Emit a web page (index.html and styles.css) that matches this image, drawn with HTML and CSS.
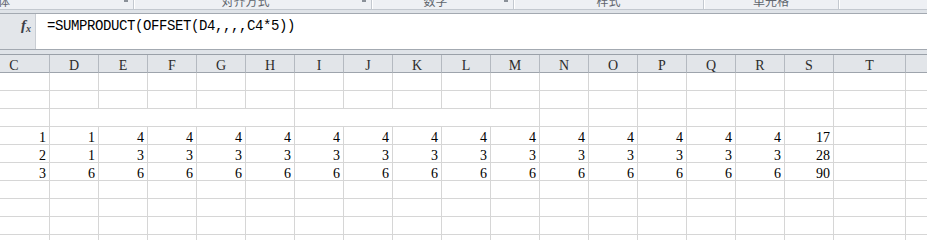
FILE: index.html
```html
<!DOCTYPE html>
<html lang="zh-CN">
<head>
<meta charset="utf-8">
<title>Excel</title>
<link rel="stylesheet" href="styles.css">
</head>
<body>
<div class="ribbon">
  <div class="group g-font launch"><span class="label">字体</span><span class="launcher"></span></div>
  <div class="group g-align launch"><span class="label">对齐方式</span><span class="launcher"></span></div>
  <div class="group g-num launch"><span class="label">数字</span><span class="launcher"></span></div>
  <div class="group g-style"><span class="label">样式</span></div>
  <div class="group g-cell"><span class="label">单元格</span></div>
  <div class="group g-edit"></div>
</div>
<div class="band band-top"></div>
<div class="formula-bar">
  <div class="fx"><span class="fx-f">f</span><span class="fx-x">x</span></div>
  <div class="formula">=SUMPRODUCT(OFFSET(D4,,,,C4*5))</div>
</div>
<div class="band band-bottom"></div>
<div class="sheet">
<table class="grid">
  <colgroup>
    <col class="c-wide">
    <col class="c"><col class="c"><col class="c"><col class="c"><col class="c"><col class="c"><col class="c"><col class="c">
    <col class="c"><col class="c"><col class="c"><col class="c"><col class="c"><col class="c"><col class="c"><col class="c">
    <col class="c-wide2"><col class="c-wide2">
  </colgroup>
  <tr class="head">
    <th>C</th><th>D</th><th>E</th><th>F</th><th>G</th><th>H</th><th>I</th><th>J</th><th>K</th><th>L</th><th>M</th><th>N</th><th>O</th><th>P</th><th>Q</th><th>R</th><th>S</th><th>T</th><th></th>
  </tr>
  <tr><td></td><td></td><td></td><td></td><td></td><td></td><td></td><td></td><td></td><td></td><td></td><td></td><td></td><td></td><td></td><td></td><td></td><td></td><td></td></tr>
  <tr><td></td><td></td><td></td><td></td><td></td><td></td><td></td><td></td><td></td><td></td><td></td><td></td><td></td><td></td><td></td><td></td><td></td><td></td><td></td></tr>
  <tr><td></td><td colspan="5"></td><td colspan="5"></td><td></td><td></td><td></td><td></td><td></td><td></td><td></td><td></td></tr>
  <tr><td>1</td><td>1</td><td>4</td><td>4</td><td>4</td><td>4</td><td>4</td><td>4</td><td>4</td><td>4</td><td>4</td><td>4</td><td>4</td><td>4</td><td>4</td><td>4</td><td>17</td><td></td><td></td></tr>
  <tr><td>2</td><td>1</td><td>3</td><td>3</td><td>3</td><td>3</td><td>3</td><td>3</td><td>3</td><td>3</td><td>3</td><td>3</td><td>3</td><td>3</td><td>3</td><td>3</td><td>28</td><td></td><td></td></tr>
  <tr><td>3</td><td>6</td><td>6</td><td>6</td><td>6</td><td>6</td><td>6</td><td>6</td><td>6</td><td>6</td><td>6</td><td>6</td><td>6</td><td>6</td><td>6</td><td>6</td><td>90</td><td></td><td></td></tr>
  <tr><td></td><td></td><td></td><td></td><td></td><td></td><td></td><td></td><td></td><td></td><td></td><td></td><td></td><td></td><td></td><td></td><td></td><td></td><td></td></tr>
  <tr><td></td><td></td><td></td><td></td><td></td><td></td><td></td><td></td><td></td><td></td><td></td><td></td><td></td><td></td><td></td><td></td><td></td><td></td><td></td></tr>
  <tr><td></td><td></td><td></td><td></td><td></td><td></td><td></td><td></td><td></td><td></td><td></td><td></td><td></td><td></td><td></td><td></td><td></td><td></td><td></td></tr>
  <tr><td></td><td></td><td></td><td></td><td></td><td></td><td></td><td></td><td></td><td></td><td></td><td></td><td></td><td></td><td></td><td></td><td></td><td></td><td></td></tr>
</table>
</div>
</body>
</html>
```

FILE: styles.css
```css
html, body {
  margin: 0;
  padding: 0;
  background: #ffffff;
  overflow: hidden;
}

body {
  width: 927px;
  height: 240px;
  font-family: "Liberation Serif", "DejaVu Serif", serif;
}

/* ribbon bottom strip */
.ribbon {
  display: flex;
  height: 9px;
  background: #eef0f4;
  border-bottom: 1px solid #c3c8cf;
  overflow: hidden;
}

.group {
  position: relative;
  flex: none;
  display: flex;
  align-items: flex-end;
  justify-content: center;
  box-sizing: border-box;
  height: 9px;
  border-right: 1px solid #c4c9d0;
  box-shadow: 1px 0 0 #ffffff;
  padding-bottom: 2px;
}

.group.launch {
  padding-right: 14px;
}

.g-font { width: 257px; margin-left: -123px; }
.g-align { width: 238px; }
.g-num { width: 142px; }
.g-style { width: 190px; }
.g-cell { width: 135px; }
.g-edit { flex: 1; border-right: none; box-shadow: none; }

.label {
  font-family: "Noto Sans CJK SC", "Noto Sans", sans-serif;
  font-size: 12px;
  line-height: 12px;
  color: #60656d;
  white-space: nowrap;
}

.launcher {
  position: absolute;
  right: 5px;
  top: 0;
  width: 4px;
  height: 2px;
  background: #8a9098;
}

/* bands */
.band {
  background: #dfe3e8;
}

.band-top {
  height: 3px;
  border-bottom: 1px solid #a3a9b1;
}

.band-bottom {
  height: 4px;
  border-top: 1px solid #a3a9b1;
  border-bottom: 1px solid #9aa0a8;
}

/* formula bar */
.formula-bar {
  display: flex;
  height: 35px;
  background: #ffffff;
}

.fx {
  width: 36px;
  flex: none;
  background: #e3e6ea;
  border-right: 1px solid #c9cdd3;
  display: flex;
  justify-content: flex-end;
  align-items: flex-start;
  padding: 3px 4px 0 0;
  box-sizing: border-box;
  font-family: "Liberation Serif", serif;
  font-style: italic;
  font-weight: bold;
  color: #3c4047;
}

.fx-f {
  font-size: 15px;
  line-height: 16px;
}

.fx-x {
  font-size: 10px;
  line-height: 10px;
  margin-top: 7px;
}

.formula {
  padding: 4px 0 0 11px;
  font-family: "Liberation Mono", "DejaVu Sans Mono", monospace;
  font-size: 14px;
  letter-spacing: -0.4px;
  line-height: 16px;
  color: #000000;
  white-space: pre;
}

/* sheet */
.sheet {
  width: 927px;
  height: 185px;
  overflow: hidden;
}

.grid {
  margin-left: -21px;
  table-layout: fixed;
  border-collapse: separate;
  border-spacing: 0;
  width: 999px;
  font-family: "Liberation Serif", "DejaVu Serif", serif;
  font-size: 14px;
}

.c-wide { width: 71px; }
.c { width: 49px; }
.c-wide2 { width: 72px; }

.grid th,
.grid td {
  box-sizing: border-box;
  padding: 0;
  overflow: hidden;
  white-space: nowrap;
}

.grid tr {
  height: 18px;
}

.head th {
  background: #e2e5e9;
  border-right: 1px solid #b4b9c0;
  border-bottom: 1px solid #9ea4ac;
  font-weight: normal;
  color: #2c2c2c;
  text-align: center;
  vertical-align: top;
  padding-top: 4px;
  line-height: 13px;
  height: 18px;
}

.grid td {
  border-right: 1px solid #d6d6d6;
  border-bottom: 1px solid #d6d6d6;
  text-align: right;
  vertical-align: top;
  padding: 4px 3px 0 0;
  line-height: 13px;
  height: 18px;
  color: #000000;
}
```
